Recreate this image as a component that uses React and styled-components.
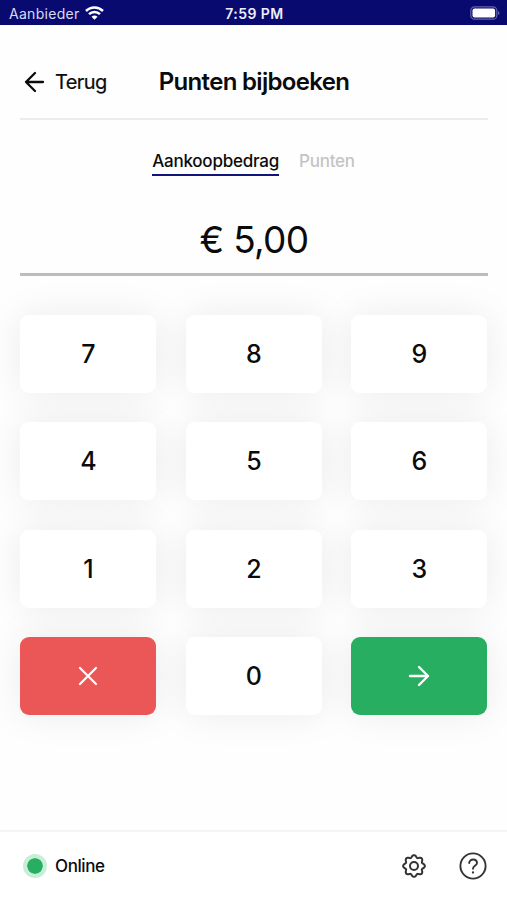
import React from "react";
import styled, { createGlobalStyle } from "styled-components";

const GlobalStyle = createGlobalStyle`
  * { box-sizing: border-box; }
  body { margin: 0; background: #fefefe; }
  button { font: inherit; color: inherit; border: 0; padding: 0; background: none; }
`;

const Screen = styled.div`
  width: 507px;
  height: 900px;
  display: flex;
  flex-direction: column;
  overflow: hidden;
  background: #fefefe;
  color: #0b0b0c;
  font-family: Inter, "Liberation Sans", sans-serif;
`;

const StatusBar = styled.div`
  flex: none;
  height: 25px;
  padding: 2px 7px 0 9px;
  display: grid;
  grid-template-columns: 1fr auto 1fr;
  align-items: center;
  background: #080a70;
  color: #fff;
  font-size: 14px;
`;

const Carrier = styled.div`
  display: flex;
  align-items: center;
  gap: 5px;
  color: #d9daf0;
  letter-spacing: 0.3px;
  svg { display: block; margin-top: -2px; }
`;

const Clock = styled.div`
  font-size: 14px;
  font-weight: 600;
  letter-spacing: 0.45px;
  color: #eeeefa;
`;

const BatterySlot = styled.div`
  display: flex;
  justify-content: flex-end;
  svg { display: block; margin-top: -2px; }
`;

const Header = styled.header`
  flex: none;
  height: 95px;
  margin: 0 19px 0 20px;
  padding-top: 20px;
  display: grid;
  grid-template-columns: 1fr auto 1fr;
  align-items: center;
  border-bottom: 2px solid #ececec;
`;

const Back = styled.button`
  display: flex;
  align-items: center;
  gap: 9px;
  padding-left: 4px;
  font-size: 20px;
  letter-spacing: -0.6px;
  -webkit-text-stroke: 0.2px;
  svg { display: block; }
`;

const Title = styled.h1`
  margin: 0;
  font-size: 24px;
  line-height: 30px;
  font-weight: 600;
  letter-spacing: -0.68px;
`;

const Tabs = styled.nav`
  flex: none;
  margin-top: 30px;
  display: flex;
  justify-content: center;
  gap: 20px;
`;

const Tab = styled.button`
  height: 26px;
  padding-bottom: 3px;
  font-size: 17px;
  font-weight: 500;
  letter-spacing: -0.23px;
  color: ${(p) => (p.$active ? "#0b0b0c" : "#c4c4c6")};
  border-bottom: 2.5px solid ${(p) => (p.$active ? "#12147c" : "transparent")};
`;

const Amount = styled.div`
  flex: none;
  height: 100px;
  margin: 0 19px 0 20px;
  padding-top: 29px;
  display: flex;
  align-items: center;
  justify-content: center;
  border-bottom: 3px solid #bcbcbc;
  font-size: 37px;
  letter-spacing: -0.7px;
`;

const Keypad = styled.main`
  flex: none;
  margin: 38.6px 19.6px 0 20.4px;
  display: grid;
  grid-template-columns: repeat(3, 1fr);
  grid-auto-rows: 78px;
  gap: 29.5px;
  isolation: isolate;
`;

const tones = { plain: "#fff", danger: "#eb5757", confirm: "#27ae60" };

const Key = styled.button`
  display: flex;
  align-items: center;
  justify-content: center;
  border-radius: 9px;
  background: ${(p) => tones[p.$tone]};
  color: ${(p) => (p.$tone === "plain" ? "#0b0b0c" : "#fff")};
  font-size: 25px;
  font-weight: 500;
`;

const KeyShade = styled.div`
  display: grid;
  border-radius: 9px;
  box-shadow: 0 0 38px rgba(0, 0, 0, 0.078);
  ${Key} { position: relative; z-index: 1; }
`;

const Footer = styled.footer`
  flex: none;
  height: 70px;
  margin-top: auto;
  padding: 0 20px 0 23px;
  display: flex;
  align-items: center;
  border-top: 2px solid #f5f5f5;
  background: #fff;
`;

const OnlineDot = styled.span`
  width: 24px;
  height: 24px;
  border-radius: 50%;
  border: 4.5px solid #c9eed7;
  background: #27ae60;
  background-clip: padding-box;
`;

const OnlineLabel = styled.span`
  margin-left: 8px;
  font-size: 17px;
  font-weight: 500;
  letter-spacing: -0.4px;
`;

const Tools = styled.div`
  margin-left: auto;
  display: flex;
  align-items: center;
  gap: 32px;
  color: #343434;
  button, svg { display: block; }
`;

const Stroke = ({ w, h = w, weight = 2, children }) => (
  <svg width={w} height={h} viewBox={`0 0 ${w} ${h}`} fill="none" stroke="currentColor"
    strokeWidth={weight} strokeLinecap="round" strokeLinejoin="round">
    {children}
  </svg>
);

const Wifi = () => (
  <svg width="19" height="14" viewBox="0 0 19 14" fill="none" stroke="#fff" strokeWidth="2.5">
    <path d="M1 5C5.8.3 13.2.3 18 5M4 8.2c3.1-3 7.9-3 11 0" />
    <path d="M6.5 10.7Q9.5 8.2 12.5 10.7L9.5 13.7Z" fill="#fff" stroke="none" />
  </svg>
);

const Battery = () => (
  <svg width="30" height="14" viewBox="0 0 30 14">
    <rect x=".8" y=".8" width="26" height="12.4" rx="3.8" fill="none" stroke="#6264aa" strokeWidth="1.2" />
    <rect x="2.5" y="2.5" width="22.6" height="9" rx="2" fill="#fff" />
    <path d="M28 5q1.5.4 1.5 2T28 9Z" fill="#6264aa" />
  </svg>
);

// Closed outline of an eight-toothed cog around (13, 13).
const cogOutline =
  Array.from({ length: 96 }, (_, i) => {
    const a = (i / 96) * Math.PI * 2;
    const r = 9.8 + 1.15 * Math.cos(8 * a) - 0.1 * Math.cos(16 * a);
    return `${i ? "L" : "M"}${(13 + r * Math.cos(a)).toFixed(2)} ${(13 + r * Math.sin(a)).toFixed(2)}`;
  }).join("") + "Z";

const keys = ["7", "8", "9", "4", "5", "6", "1", "2", "3", "clear", "0", "next"];
const toneOf = { clear: "danger", next: "confirm" };
const glyphs = {
  clear: <Stroke w={20} weight={2.2}><path d="M2 2l16 16M18 2L2 18" /></Stroke>,
  next: <Stroke w={22} weight={2.4}><path d="M2 11h18M11 2l9 9-9 9" /></Stroke>,
};

export default function App() {
  return (
    <Screen>
      <GlobalStyle />
      <StatusBar>
        <Carrier>Aanbieder <Wifi /></Carrier>
        <Clock>7:59 PM</Clock>
        <BatterySlot><Battery /></BatterySlot>
      </StatusBar>
      <Header>
        <Back>
          <Stroke w={22} weight={2.3}><path d="M19 11H2M11 2l-9 9 9 9" /></Stroke>
          Terug
        </Back>
        <Title>Punten bijboeken</Title>
      </Header>
      <Tabs>
        <Tab $active>Aankoopbedrag</Tab>
        <Tab>Punten</Tab>
      </Tabs>
      <Amount>€ 5,00</Amount>
      <Keypad>
        {keys.map((k) => (
          <KeyShade key={k}>
            <Key $tone={toneOf[k] || "plain"} aria-label={k}>{glyphs[k] || k}</Key>
          </KeyShade>
        ))}
      </Keypad>
      <Footer>
        <OnlineDot />
        <OnlineLabel>Online</OnlineLabel>
        <Tools>
          <button aria-label="Instellingen">
            <Stroke w={26} weight={2}>
              <path d={cogOutline} />
              <circle cx="13" cy="13" r="4" />
            </Stroke>
          </button>
          <button aria-label="Help">
            <Stroke w={28} weight={1.9}>
              <circle cx="14" cy="14" r="12.6" />
              <path d="M10.2 11c0-4.7 7.8-4.5 7.8 0 0 2.8-4 2.9-4 5.7" />
              <path d="M14 20.4v.1" strokeWidth="2.3" />
            </Stroke>
          </button>
        </Tools>
      </Footer>
    </Screen>
  );
}
